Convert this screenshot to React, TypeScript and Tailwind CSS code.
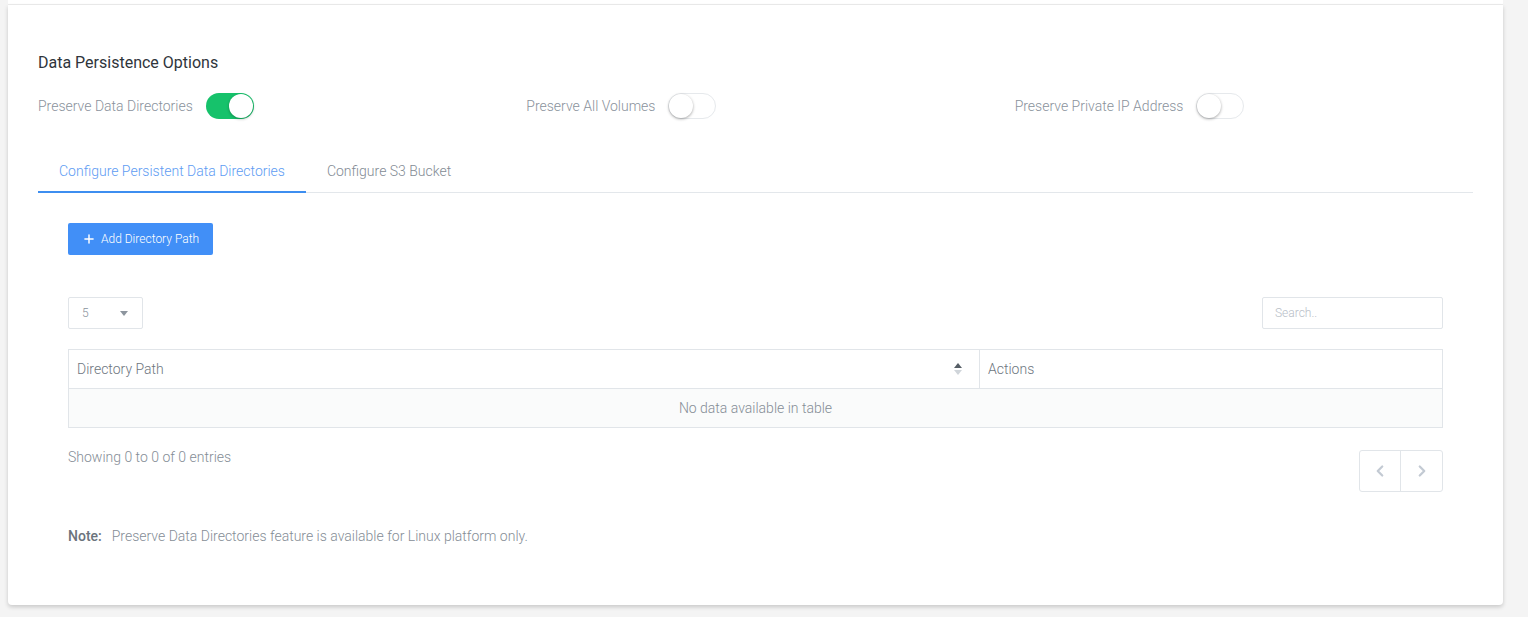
import { Plus, ChevronLeft, ChevronRight } from 'lucide-react';

function Toggle({ on }: { on?: boolean }) {
  if (on) {
    return (
      <span className="relative inline-block h-[26px] w-[48px] rounded-full bg-[#16c26b]">
        <span className="absolute right-[1px] top-[1px] h-[24px] w-[24px] rounded-full bg-white shadow-[0_1px_3px_rgba(0,0,0,0.3)]" />
      </span>
    );
  }
  return (
    <span className="relative inline-block h-[26px] w-[48px] rounded-full border border-[#e6e9ec] bg-white">
      <span className="absolute left-[0px] top-[0px] h-[24px] w-[24px] rounded-full bg-white shadow-[0_1px_3px_rgba(0,0,0,0.35)]" />
    </span>
  );
}

const options = [
  { label: 'Preserve Data Directories', on: true },
  { label: 'Preserve All Volumes', on: false },
  { label: 'Preserve Private IP Address', on: false },
];

export default function App() {
  return (
    <div
      className="min-h-[617px] bg-[#f4f4f4] pr-[25px] pl-[8px]"
      style={{ fontFamily: 'Roboto, "Liberation Sans", sans-serif' }}
    >
      <div className="h-[5px] border-b border-[#ededed] bg-white" />
      <div className="rounded-b-[4px] bg-white px-[30px] pt-[48px] pb-[58px] shadow-[0_2px_4px_rgba(0,0,0,0.18)]">
        <h3 className="text-[16px] leading-[20px] font-normal text-[#2f353b]">Data Persistence Options</h3>

        <div className="mx-[-15px] mt-[20px] grid grid-cols-3">
          {options.map((o) => (
            <div key={o.label} className="flex items-center gap-[13px] px-[15px]">
              <span className="text-[14px] font-light text-[#8a929c]">{o.label}</span>
              <Toggle on={o.on} />
            </div>
          ))}
        </div>

        <div className="mt-[42px] flex border-b border-[#e3e7eb]">
          <div className="mb-[-1px] border-b-2 border-[#3d8ef0] px-[21px] pb-[9px] text-[14px] font-light text-[#5e9cf3]">
            Configure Persistent Data Directories
          </div>
          <div className="px-[21px] pb-[9px] text-[14px] font-light text-[#838b94]">Configure S3 Bucket</div>
        </div>

        <div className="px-[30px] pt-[30px]">
          <button
            type="button"
            className="flex h-[32px] items-center gap-[5px] rounded-[2px] bg-[#418ff7] px-[14px] text-[12px] font-light text-white"
          >
            <Plus size={14} strokeWidth={2.5} />
            Add Directory Path
          </button>

          <div className="mt-[42px] flex items-center justify-between">
            <div className="flex h-[32px] w-[75px] items-center justify-between rounded-[2px] border border-[#e1e5e9] pl-[13px] pr-[14px] text-[12px] font-light text-[#8a929c]">
              <span>5</span>
              <span className="h-0 w-0 border-x-[4px] border-t-[5px] border-x-transparent border-t-[#8d959e]" />
            </div>
            <input
              placeholder="Search.."
              className="h-[32px] w-[181px] rounded-[2px] border border-[#e1e5e9] px-[12px] text-[12px] font-light placeholder:text-[#b7bec7] outline-none"
            />
          </div>

          <table className="mt-[20px] w-full border-collapse text-[14px] font-light">
            <thead>
              <tr className="h-[39px]">
                <th className="w-[911px] border border-[#e1e5e9] px-[8px] text-left font-light text-[#6e7680]">
                  <div className="flex items-center justify-between">
                    <span>Directory Path</span>
                    <span className="mr-[9px] flex flex-col items-center gap-[2px]">
                      <span className="h-0 w-0 border-x-[4px] border-b-[5px] border-x-transparent border-b-[#565e66]" />
                      <span className="h-0 w-0 border-x-[4px] border-t-[5px] border-x-transparent border-t-[#d0d5da]" />
                    </span>
                  </div>
                </th>
                <th className="border border-[#e1e5e9] px-[8px] text-left font-light text-[#6e7680]">Actions</th>
              </tr>
            </thead>
            <tbody>
              <tr className="h-[39px] bg-[#fafbfb]">
                <td colSpan={2} className="border border-[#e1e5e9] text-center text-[#858d96]">
                  No data available in table
                </td>
              </tr>
            </tbody>
          </table>

          <div className="mt-[19px] flex items-start justify-between">
            <span className="text-[14px] font-light text-[#858d96]">Showing 0 to 0 of 0 entries</span>
            <div className="mt-[3px] flex h-[42px] overflow-hidden rounded-[3px] border border-[#e1e5e9]">
              <span className="flex w-[41px] items-center justify-center border-r border-[#e1e5e9] text-[#c3cad3]">
                <ChevronLeft size={18} strokeWidth={3} />
              </span>
              <span className="flex w-[41px] items-center justify-center text-[#c3cad3]">
                <ChevronRight size={18} strokeWidth={3} />
              </span>
            </div>
          </div>

          <p className="mt-[34px] text-[14px] font-light text-[#858d96]">
            <span className="mr-[10px] font-medium text-[#6b737c]">Note:</span>
            Preserve Data Directories feature is available for Linux platform only.
          </p>
        </div>
      </div>
    </div>
  );
}
